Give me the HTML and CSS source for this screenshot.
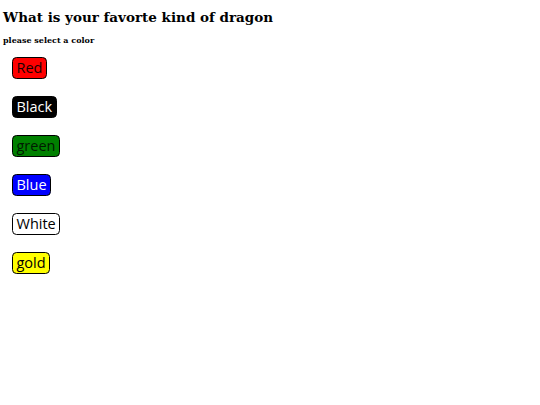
FILE: index.html
```html
<!DOCTYPE html>
<html>
<head>
<meta charset="utf-8">
<link rel="stylesheet" href="styles.css">
</head>
<body>
<h1 class="title">What is your favorte kind of dragon</h1>
<h2 class="subtitle">please select a color</h2>
<div class="choices">
  <button class="choice red">Red</button>
  <button class="choice black">Black</button>
  <button class="choice green">green</button>
  <button class="choice blue">Blue</button>
  <button class="choice white">White</button>
  <button class="choice gold">gold</button>
</div>
</body>
</html>
```
FILE: styles.css
```css
html, body { background: #fff; }
body {
  margin: 0;
  padding: 8px 3px;
  font-family: "DejaVu Serif", serif;
  color: #000;
}
.title {
  font-size: 13.5px;
  font-weight: bold;
  margin: 0 0 9px 0;
  line-height: 18px;
}
.subtitle {
  font-size: 8px;
  font-weight: bold;
  margin: 0 0 12px 0;
  line-height: 10px;
}
.choices {
  display: flex;
  flex-direction: column;
  align-items: flex-start;
  gap: 17px;
  padding-left: 9px;
}
.choice {
  font-family: "Open Sans", "Noto Sans", sans-serif;
  font-size: 14.5px;
  line-height: 18px;
  height: 22px;
  padding: 0 3.5px;
  border: 1.5px solid #000;
  border-radius: 4.5px;
  margin: 0;
  cursor: pointer;
}
.red { background: #ff0000; color: #1a0000; }
.black { background: #000; color: #fff; }
.green { background: #008000; color: #001a00; }
.blue { background: #0000ff; color: #fff; }
.white { background: #fff; color: #000; }
.gold { background: #ffff00; color: #000; }
```
